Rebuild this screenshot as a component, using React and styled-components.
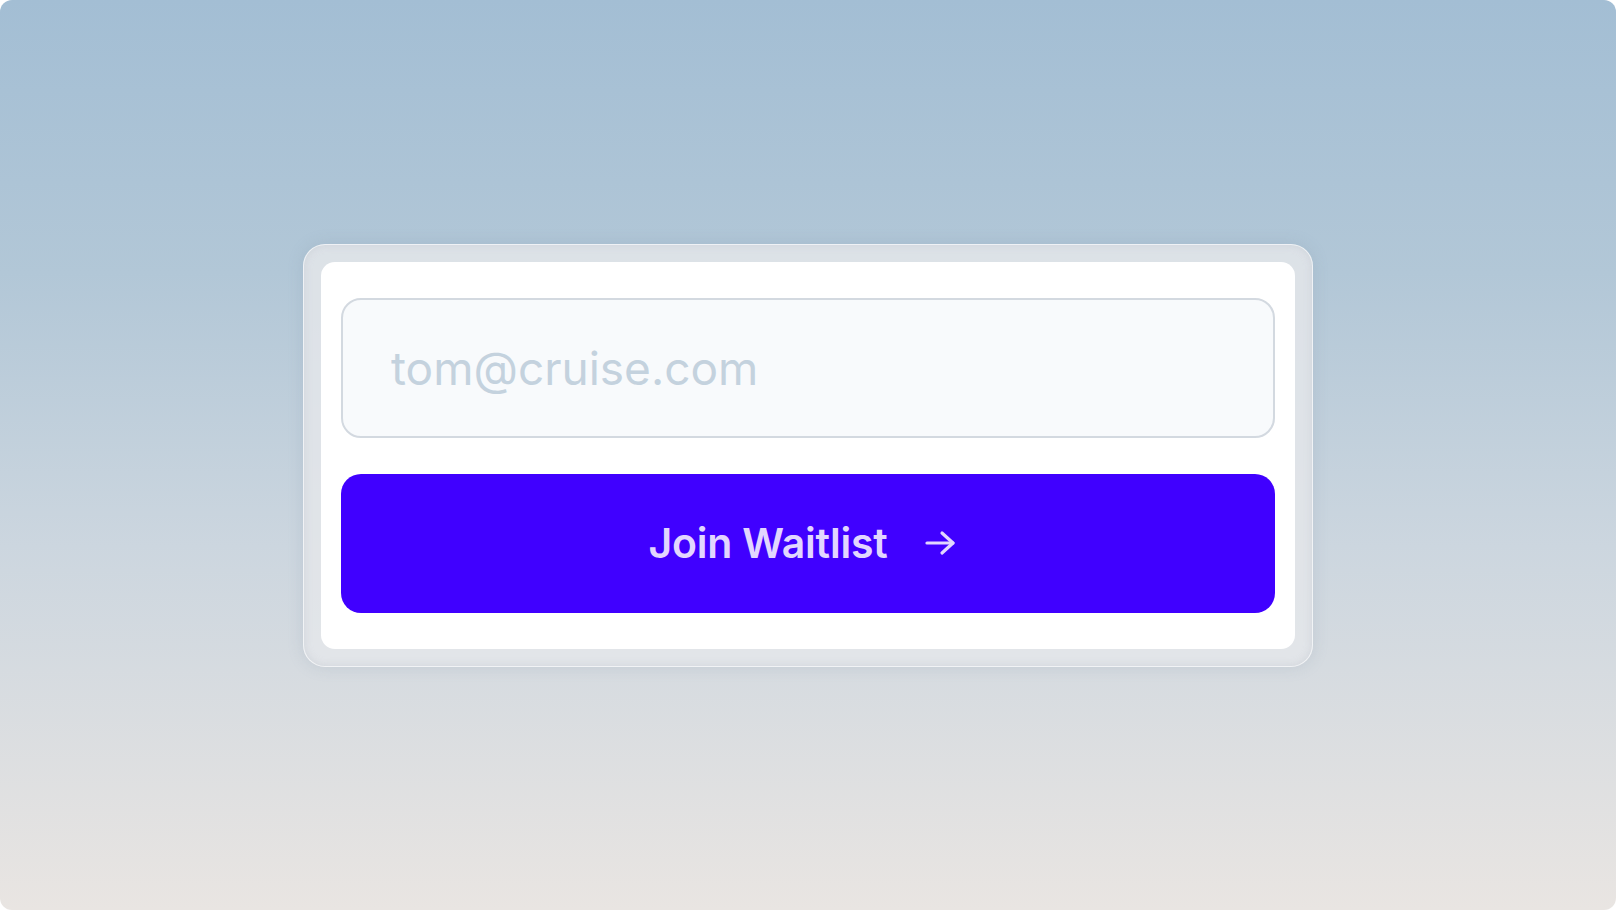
import styled, { createGlobalStyle } from "styled-components";

const GlobalStyle = createGlobalStyle`
  html, body {
    margin: 0;
    padding: 0;
    background: #ffffff;
  }
  * {
    box-sizing: border-box;
  }
`;

const ArrowIcon = () => (
  <svg width="32" height="28" viewBox="0 0 32 28" fill="none" stroke="currentColor" strokeWidth="3.2" strokeLinecap="round" strokeLinejoin="round">
    <path d="M3 14h26" />
    <path d="M18 4l11 10-11 10" />
  </svg>
);

const App = () => {
  return (
    <>
      <GlobalStyle />
      <Page>
        <Frame>
          <Panel>
            <EmailInput type="email" placeholder="tom@cruise.com" />
            <JoinButton type="button">
              <span>Join Waitlist</span>
              <ArrowIcon />
            </JoinButton>
          </Panel>
        </Frame>
      </Page>
    </>
  );
};

const Page = styled.div`
  width: 1616px;
  height: 910px;
  border-radius: 12px;
  overflow: hidden;
  display: flex;
  align-items: center;
  justify-content: center;
  background: linear-gradient(180deg, #a3bed4 0%, #b2c7d7 30%, #ccd6df 60%, #e9e5e2 100%);
  font-family: Inter, "Liberation Sans", sans-serif;
`;

const Frame = styled.div`
  width: 1010px;
  padding: 17px;
  border-radius: 22px;
  background: rgba(228, 230, 234, 0.85);
  border: 1px solid rgba(255, 255, 255, 0.55);
  box-shadow: 0 0 16px rgba(120, 140, 160, 0.2), inset 0 0 8px rgba(205, 210, 216, 0.9);
`;

const Panel = styled.div`
  background: #ffffff;
  border-radius: 14px;
  padding: 36px 20px;
  display: flex;
  flex-direction: column;
  gap: 36px;
`;

const EmailInput = styled.input`
  height: 140px;
  width: 100%;
  border: 2px solid #d3d9e0;
  border-radius: 20px;
  background: #f8fafc;
  padding: 0 48px;
  font-family: Inter, "Liberation Sans", sans-serif;
  font-size: 46px;
  color: #334155;
  outline: none;

  &::placeholder {
    color: #c4d2de;
  }
`;

const JoinButton = styled.button`
  height: 139px;
  width: 100%;
  border: none;
  border-radius: 20px;
  background: #4000ff;
  color: #e2d6ff;
  display: flex;
  align-items: center;
  justify-content: center;
  gap: 36px;
  font-family: Inter, "Liberation Sans", sans-serif;
  font-size: 41px;
  font-weight: 600;
  letter-spacing: -0.2px;
  cursor: pointer;
  padding: 0 12px 0 0;
`;

export default App;
